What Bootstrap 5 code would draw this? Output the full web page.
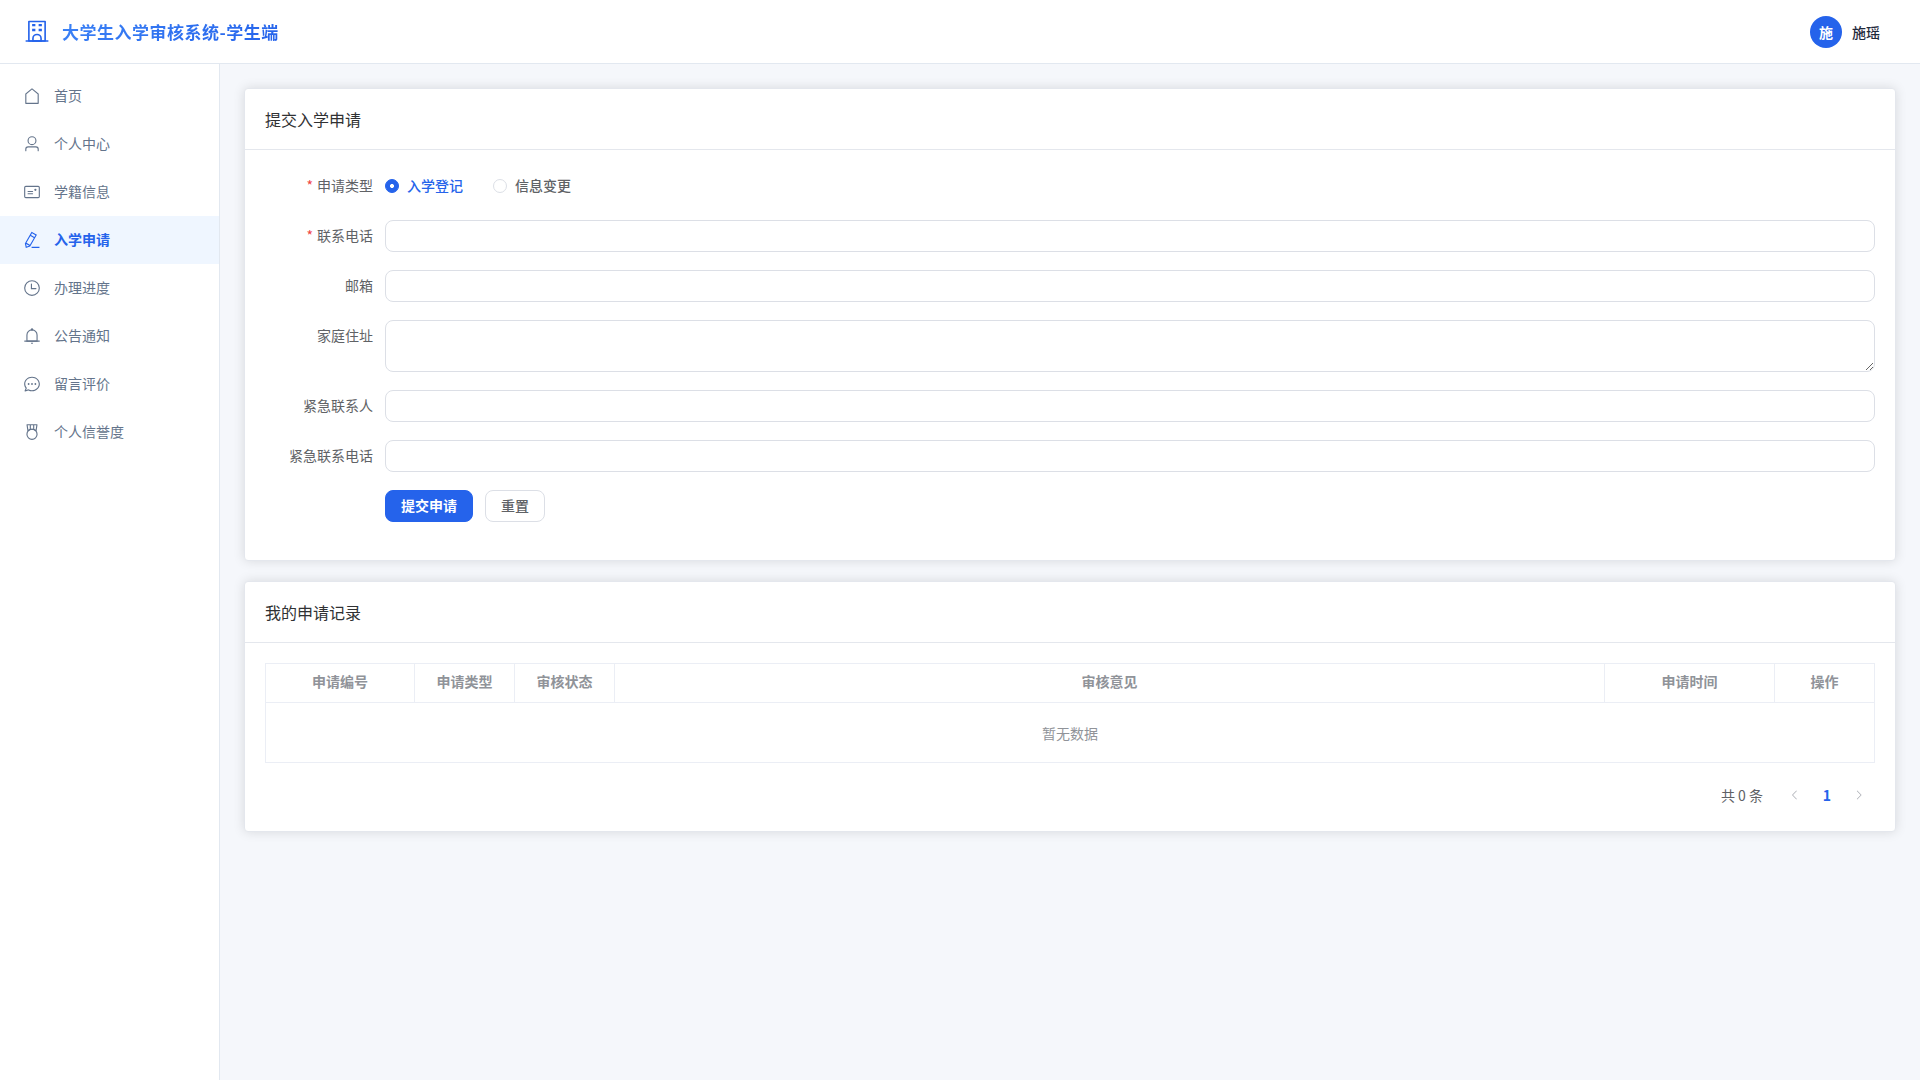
<!DOCTYPE html>
<html lang="zh-CN">
<head>
<meta charset="utf-8">
<meta name="viewport" content="width=device-width, initial-scale=1">
<title>大学生入学审核系统-学生端</title>
<link href="https://cdn.jsdelivr.net/npm/bootstrap@5.3.0/dist/css/bootstrap.min.css" rel="stylesheet">
<style>
  :root { --brand: #2563eb; --line: #e4e7ed; --field: #dcdfe6; --ink: #606266; }
  body { font-family: "Noto Sans CJK SC", sans-serif; font-size: 14px; line-height: 20px; color: #303133; background: #f5f7fb; }
  svg { fill: currentColor; display: block; flex: none; }
  .topbar { height: 64px; padding: 0 40px 0 24px; border-bottom: 1px solid #e2e8f0; }
  .logo { gap: 12px; color: var(--brand); }
  .logo-text { font-size: 17px; line-height: 26px; font-weight: 700; letter-spacing: .5px; background: linear-gradient(135deg, #3b82f6, #2563eb); -webkit-background-clip: text; background-clip: text; color: transparent; }
  .user { gap: 10px; }
  .avatar { width: 32px; height: 32px; background: var(--brand); font-weight: 600; }
  .user-name { color: #1e293b; font-weight: 500; line-height: 22px; }
  .shell { height: calc(100vh - 64px); }
  .side { width: 220px; padding-top: 8px; border-right: 1px solid #e2e8f0; }
  .side .nav-link { height: 48px; padding: 0 23px; gap: 13px; color: #64748b; font-size: 14px; }
  .side .nav-link span { padding-bottom: 2px; }
  .side .nav-link.active { color: var(--brand); background: #eff6ff; font-weight: 600; }
  .content { padding: 24px; gap: 20px; }
  .panel { border: 1px solid var(--line); border-radius: 4px; box-shadow: 0 0 12px rgba(0,0,0,.12); }
  .panel .card-header { height: 61px; padding: 18px 20px; background: #fff; border-color: var(--line); font-size: 16px; line-height: 24px; }
  .panel .card-body { padding: 20px; }
  .field-row { margin-bottom: 18px; }
  .field-label { width: 120px; height: 32px; line-height: 30px; padding-right: 12px; color: var(--ink); text-align: right; flex: none; }
  .required::before { content: "*"; color: #ef4444; margin-right: 4px; }
  .panel .form-control { height: 32px; padding: 1px 11px; border-color: var(--field); border-radius: 8px; font-size: 14px; }
  .panel textarea.form-control { height: 52px; min-height: 52px; resize: vertical; }
  .choices { gap: 30px; }
  .choice { gap: 8px; color: var(--ink); font-weight: 500; height: 32px; }
  .choice span { padding-bottom: 2px; }
  .choice .form-check-input { width: 14px; height: 14px; margin: 0; border-color: var(--field); }
  .choice .form-check-input:checked { border-color: var(--brand); background-color: var(--brand); background-image: radial-gradient(circle, #fff 1.7px, transparent 2.3px); }
  .choice.picked { color: var(--brand); }
  .act { height: 32px; padding: 0 15px 2px; border-radius: 8px; font-size: 14px; line-height: 28px; font-weight: 500; }
  .act-main { --bs-btn-bg: #2563eb; --bs-btn-border-color: #2563eb; font-weight: 600; }
  .act-plain { border: 1px solid var(--field); background: #fff; color: var(--ink); margin-left: 12px; }
  .records { table-layout: fixed; border-collapse: separate; border-spacing: 0; border: 1px solid #ebeef5; border-right: 0; margin: 0 0 16px; color: #909399; text-align: center; }
  .records > :not(caption) > * > * { padding: 0; border: 0 solid #ebeef5; border-right-width: 1px; color: #909399; vertical-align: middle; }
  .records > thead > tr > th { height: 39px; padding-bottom: 4px; border-bottom-width: 1px; font-weight: 600; }
  .records > tbody > tr > td { height: 59px; padding-top: 1px; }
  .col-no { width: 149px; } .col-s { width: 100px; } .col-time { width: 170px; }
  .pager { color: var(--ink); height: 32px; }
  .pager-cell { width: 32px; height: 32px; color: #a8abb2; }
  .pager-cell.current { color: var(--brand); font-weight: 700; }
</style>
</head>
<body class="overflow-hidden">
<header class="topbar bg-white d-flex align-items-center justify-content-between">
  <div class="logo d-flex align-items-center">
    <svg width="26" height="26" viewBox="0 0 1024 1024"><path d="M224 128v704h576V128H224zm-32-64h640a32 32 0 0 1 32 32v768a32 32 0 0 1-32 32H192a32 32 0 0 1-32-32V96a32 32 0 0 1 32-32z"/><path d="M64 832h896v64H64zm256-640h128v96H320z"/><path d="M384 832h256v-64a128 128 0 1 0-256 0v64zm128-256a192 192 0 0 1 192 192v128H320V768a192 192 0 0 1 192-192zM320 384h128v96H320zm256-192h128v96H576zm0 192h128v96H576z"/></svg>
    <span class="logo-text">大学生入学审核系统-学生端</span>
  </div>
  <div class="user d-flex align-items-center">
    <span class="avatar rounded-circle text-white d-flex align-items-center justify-content-center">施</span>
    <span class="user-name">施瑶</span>
  </div>
</header>
<div class="shell d-flex">
  <nav class="side bg-white nav flex-column flex-nowrap flex-shrink-0">
    <a class="nav-link d-flex align-items-center" href="#"><svg width="18" height="18" viewBox="0 0 1024 1024"><path d="M192 413.952V896h640V413.952L512 147.328 192 413.952zM139.52 374.4l352-293.312a32 32 0 0 1 40.96 0l352 293.312A32 32 0 0 1 896 398.976V928a32 32 0 0 1-32 32H160a32 32 0 0 1-32-32V399.04a32 32 0 0 1 11.52-24.64z"/></svg><span>首页</span></a>
    <a class="nav-link d-flex align-items-center" href="#"><svg width="18" height="18" viewBox="0 0 1024 1024"><path d="M512 512a192 192 0 1 0 0-384 192 192 0 0 0 0 384zm0 64a256 256 0 1 1 0-512 256 256 0 0 1 0 512zm320 320v-96a96 96 0 0 0-96-96H288a96 96 0 0 0-96 96v96a32 32 0 1 1-64 0v-96a160 160 0 0 1 160-160h448a160 160 0 0 1 160 160v96a32 32 0 1 1-64 0z"/></svg><span>个人中心</span></a>
    <a class="nav-link d-flex align-items-center" href="#"><svg width="18" height="18" viewBox="0 0 1024 1024"><path d="M160 224a32 32 0 0 0-32 32v512a32 32 0 0 0 32 32h704a32 32 0 0 0 32-32V256a32 32 0 0 0-32-32H160zm0-64h704a96 96 0 0 1 96 96v512a96 96 0 0 1-96 96H160a96 96 0 0 1-96-96V256a96 96 0 0 1 96-96z"/><path d="M704 320a64 64 0 1 1 0 128 64 64 0 0 1 0-128zM288 448h256q32 0 32 32t-32 32H288q-32 0-32-32t32-32zm0 128h256q32 0 32 32t-32 32H288q-32 0-32-32t32-32z"/></svg><span>学籍信息</span></a>
    <a class="nav-link active d-flex align-items-center" href="#"><svg width="18" height="18" viewBox="0 0 1024 1024"><path d="m199.04 672.64 193.984 112 224-387.968-193.92-112-224 388.032zm-23.872 60.16 32.896 148.288 144.896-45.696L175.168 732.8zM455.04 229.248l193.92 112 56.704-98.112-193.984-112-56.64 98.112zM104.32 708.8l384-665.024 304.768 175.936L409.152 884.8h.064l-248.448 78.336L104.32 708.8zm384 254.272v-64h448v64h-448z"/></svg><span>入学申请</span></a>
    <a class="nav-link d-flex align-items-center" href="#"><svg width="18" height="18" viewBox="0 0 1024 1024"><path d="M512 896a384 384 0 1 0 0-768 384 384 0 0 0 0 768zm0 64a448 448 0 1 1 0-896 448 448 0 0 1 0 896z"/><path d="M480 256a32 32 0 0 1 32 32v256a32 32 0 0 1-64 0V288a32 32 0 0 1 32-32z"/><path d="M480 512h256q32 0 32 32t-32 32H480q-32 0-32-32t32-32z"/></svg><span>办理进度</span></a>
    <a class="nav-link d-flex align-items-center" href="#"><svg width="18" height="18" viewBox="0 0 1024 1024"><path d="M512 64a64 64 0 0 1 64 64v64H448v-64a64 64 0 0 1 64-64z"/><path d="M256 768h512V448a256 256 0 1 0-512 0v320zm256-640a320 320 0 0 1 320 320v384H192V448a320 320 0 0 1 320-320z"/><path d="M96 768h832q32 0 32 32t-32 32H96q-32 0-32-32t32-32zm352 128h128a64 64 0 0 1-128 0z"/></svg><span>公告通知</span></a>
    <a class="nav-link d-flex align-items-center" href="#"><svg width="18" height="18" viewBox="0 0 1024 1024"><path d="m174.72 855.68 135.296-45.12 23.68 11.84C388.096 849.536 448.576 864 512 864c211.84 0 384-166.784 384-352S723.84 160 512 160 128 326.784 128 512c0 69.12 24.96 139.264 70.848 199.232l22.08 28.8-46.272 115.584zm-45.248 82.56A32 32 0 0 1 89.6 896l58.368-145.92C94.72 680.32 64 596.864 64 512 64 299.904 256 96 512 96s448 203.904 448 416-192 416-448 416a461.056 461.056 0 0 1-206.912-48.384l-175.616 58.56z"/><path d="M512 563.2a51.2 51.2 0 1 1 0-102.4 51.2 51.2 0 0 1 0 102.4zm192 0a51.2 51.2 0 1 1 0-102.4 51.2 51.2 0 0 1 0 102.4zm-384 0a51.2 51.2 0 1 1 0-102.4 51.2 51.2 0 0 1 0 102.4z"/></svg><span>留言评价</span></a>
    <a class="nav-link d-flex align-items-center" href="#"><svg width="18" height="18" viewBox="0 0 1024 1024"><path d="M512 896a256 256 0 1 0 0-512 256 256 0 0 0 0 512zm0 64a320 320 0 1 1 0-640 320 320 0 0 1 0 640z"/><path d="M576 128H448v200a286.72 286.72 0 0 1 64-8c19.52 0 40.832 2.688 64 8V128zm64 0v219.648c24.448 9.088 50.56 20.416 78.4 33.92L757.44 128H640zm-256 0H266.624l39.04 253.568c27.84-13.504 53.888-24.832 78.336-33.92V128zM229.312 64h565.376a32 32 0 0 1 31.616 36.864L768 480c-113.792-64-199.104-96-256-96-56.896 0-142.208 32-256 96l-58.304-379.136A32 32 0 0 1 229.312 64z"/></svg><span>个人信誉度</span></a>
  </nav>
  <main class="content flex-grow-1 d-flex flex-column">
    <section class="panel card">
      <div class="card-header">提交入学申请</div>
      <form class="card-body">
        <div class="field-row d-flex">
          <span class="field-label required">申请类型</span>
          <div class="choices d-flex">
            <label class="choice picked d-flex align-items-center"><input class="form-check-input" type="radio" name="kind" checked><span>入学登记</span></label>
            <label class="choice d-flex align-items-center"><input class="form-check-input" type="radio" name="kind"><span>信息变更</span></label>
          </div>
        </div>
        <div class="field-row d-flex"><label class="field-label required" for="phone">联系电话</label><input class="form-control" id="phone" type="text"></div>
        <div class="field-row d-flex"><label class="field-label" for="mail">邮箱</label><input class="form-control" id="mail" type="text"></div>
        <div class="field-row d-flex"><label class="field-label" for="addr">家庭住址</label><textarea class="form-control" id="addr"></textarea></div>
        <div class="field-row d-flex"><label class="field-label" for="kin">紧急联系人</label><input class="form-control" id="kin" type="text"></div>
        <div class="field-row d-flex"><label class="field-label" for="kinphone">紧急联系电话</label><input class="form-control" id="kinphone" type="text"></div>
        <div class="field-row d-flex">
          <span class="field-label"></span>
          <button class="btn btn-primary act act-main" type="button">提交申请</button>
          <button class="btn act act-plain" type="reset">重置</button>
        </div>
      </form>
    </section>
    <section class="panel card">
      <div class="card-header">我的申请记录</div>
      <div class="card-body">
        <table class="table records">
          <colgroup><col class="col-no"><col class="col-s"><col class="col-s"><col><col class="col-time"><col class="col-s"></colgroup>
          <thead><tr><th>申请编号</th><th>申请类型</th><th>审核状态</th><th>审核意见</th><th>申请时间</th><th>操作</th></tr></thead>
          <tbody><tr><td colspan="6">暂无数据</td></tr></tbody>
        </table>
        <div class="pager d-flex align-items-center justify-content-end">
          <span class="me-3">共 0 条</span>
          <span class="pager-cell d-flex align-items-center justify-content-center"><svg width="12" height="12" viewBox="0 0 1024 1024"><path d="M609.408 149.376 277.76 489.6a32 32 0 0 0 0 44.672l331.648 340.352a29.12 29.12 0 0 0 41.728 0 30.592 30.592 0 0 0 0-42.752L339.264 511.936l311.872-319.872a30.592 30.592 0 0 0 0-42.688 29.12 29.12 0 0 0-41.728 0z"/></svg></span>
          <span class="pager-cell current d-flex align-items-center justify-content-center">1</span>
          <span class="pager-cell d-flex align-items-center justify-content-center"><svg width="12" height="12" viewBox="0 0 1024 1024"><path d="M340.864 149.312a30.592 30.592 0 0 0 0 42.752L652.736 512 340.864 831.872a30.592 30.592 0 0 0 0 42.752 29.12 29.12 0 0 0 41.728 0L714.24 534.336a32 32 0 0 0 0-44.672L382.592 149.376a29.12 29.12 0 0 0-41.728 0z"/></svg></span>
        </div>
      </div>
    </section>
  </main>
</div>
<script src="https://cdn.jsdelivr.net/npm/bootstrap@5.3.0/dist/js/bootstrap.bundle.min.js"></script>
</body>
</html>
